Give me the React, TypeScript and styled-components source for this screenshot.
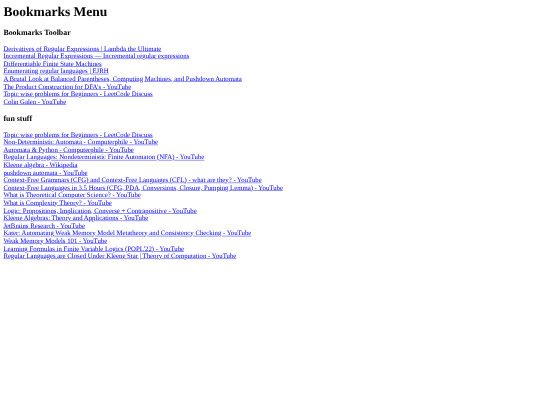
import * as React from 'react';
import styled, { createGlobalStyle } from 'styled-components';

const GlobalStyle = createGlobalStyle`
	html, body {
		margin: 0;
		background: #fff;
	}
`;

const Viewport = styled.div`
	width: 540px;
	height: 405px;
	overflow: hidden;
`;

// the reference is a 1280px wide page photographed small
const Page = styled.div`
	width: 1280px;
	padding: 8px;
	box-sizing: border-box;
	font-family: "Liberation Serif", "Times New Roman", serif;
	font-size: 16px;
	color: #000;
	text-rendering: geometricPrecision;
	transform: scale(0.4219);
	transform-origin: 0 0;
	filter: blur(0.6px);
`;

const PageTitle = styled.h1`
	margin: 0 0 21.44px;
	font-size: 32px;
	font-weight: bold;
`;

const SectionTitle = styled.h3`
	margin: 0 0 18.72px;
	font-size: 18.72px;
	font-weight: bold;
`;

const LinkList = styled.div`
	display: flex;
	flex-direction: column;
	align-items: flex-start;
	margin-bottom: 18.72px;
`;

const Bookmark = styled.a`
	color: #0000ee;
	text-decoration: underline;
	white-space: nowrap;
`;

const sections = [
	{
		title: 'Bookmarks Toolbar',
		links: [
			'Derivatives of Regular Expressions | Lambda the Ultimate',
			'Incremental Regular Expressions — Incremental regular expressions',
			'Differentiable Finite State Machines',
			'Enumerating regular languages | EJRH',
			'A Brutal Look at Balanced Parentheses, Computing Machines, and Pushdown Automata',
			"The Product Construction for DFA's - YouTube",
			'Topic wise problems for Beginners - LeetCode Discuss',
			'Colin Galen - YouTube',
		],
	},
	{
		title: 'fun stuff',
		links: [
			'Topic wise problems for Beginners - LeetCode Discuss',
			'Non-Deterministic Automata - Computerphile - YouTube',
			'Automata & Python - Computerphile - YouTube',
			'Regular Languages: Nondeterministic Finite Automaton (NFA) - YouTube',
			'Kleene algebra - Wikipedia',
			'pushdown automata - YouTube',
			'Context-Free Grammars (CFG) and Context-Free Languages (CFL) - what are they? - YouTube',
			'Context-Free Languages in 3.5 Hours (CFG, PDA, Conversions, Closure, Pumping Lemma) - YouTube',
			'What is Theoretical Computer Science? - YouTube',
			'What is Complexity Theory? - YouTube',
			'Logic: Propositions, Implication, Converse + Contrapositive - YouTube',
			'Kleene Algebras: Theory and Applications - YouTube',
			'JetBrains Research - YouTube',
			'Kater: Automating Weak Memory Model Metatheory and Consistency Checking - YouTube',
			'Weak Memory Models 101 - YouTube',
			"Learning Formulas in Finite Variable Logics (POPL'22) - YouTube",
			'Regular Languages are Closed Under Kleene Star | Theory of Computation - YouTube',
		],
	},
];

export default function App() {
	return (
		<Viewport>
			<GlobalStyle />
			<Page>
				<PageTitle>Bookmarks Menu</PageTitle>
				{sections.map((section) => (
					<section key={section.title}>
						<SectionTitle>{section.title}</SectionTitle>
						<LinkList>
							{section.links.map((link) => (
								<Bookmark key={link} href="#">{link}</Bookmark>
							))}
						</LinkList>
					</section>
				))}
			</Page>
		</Viewport>
	);
}
